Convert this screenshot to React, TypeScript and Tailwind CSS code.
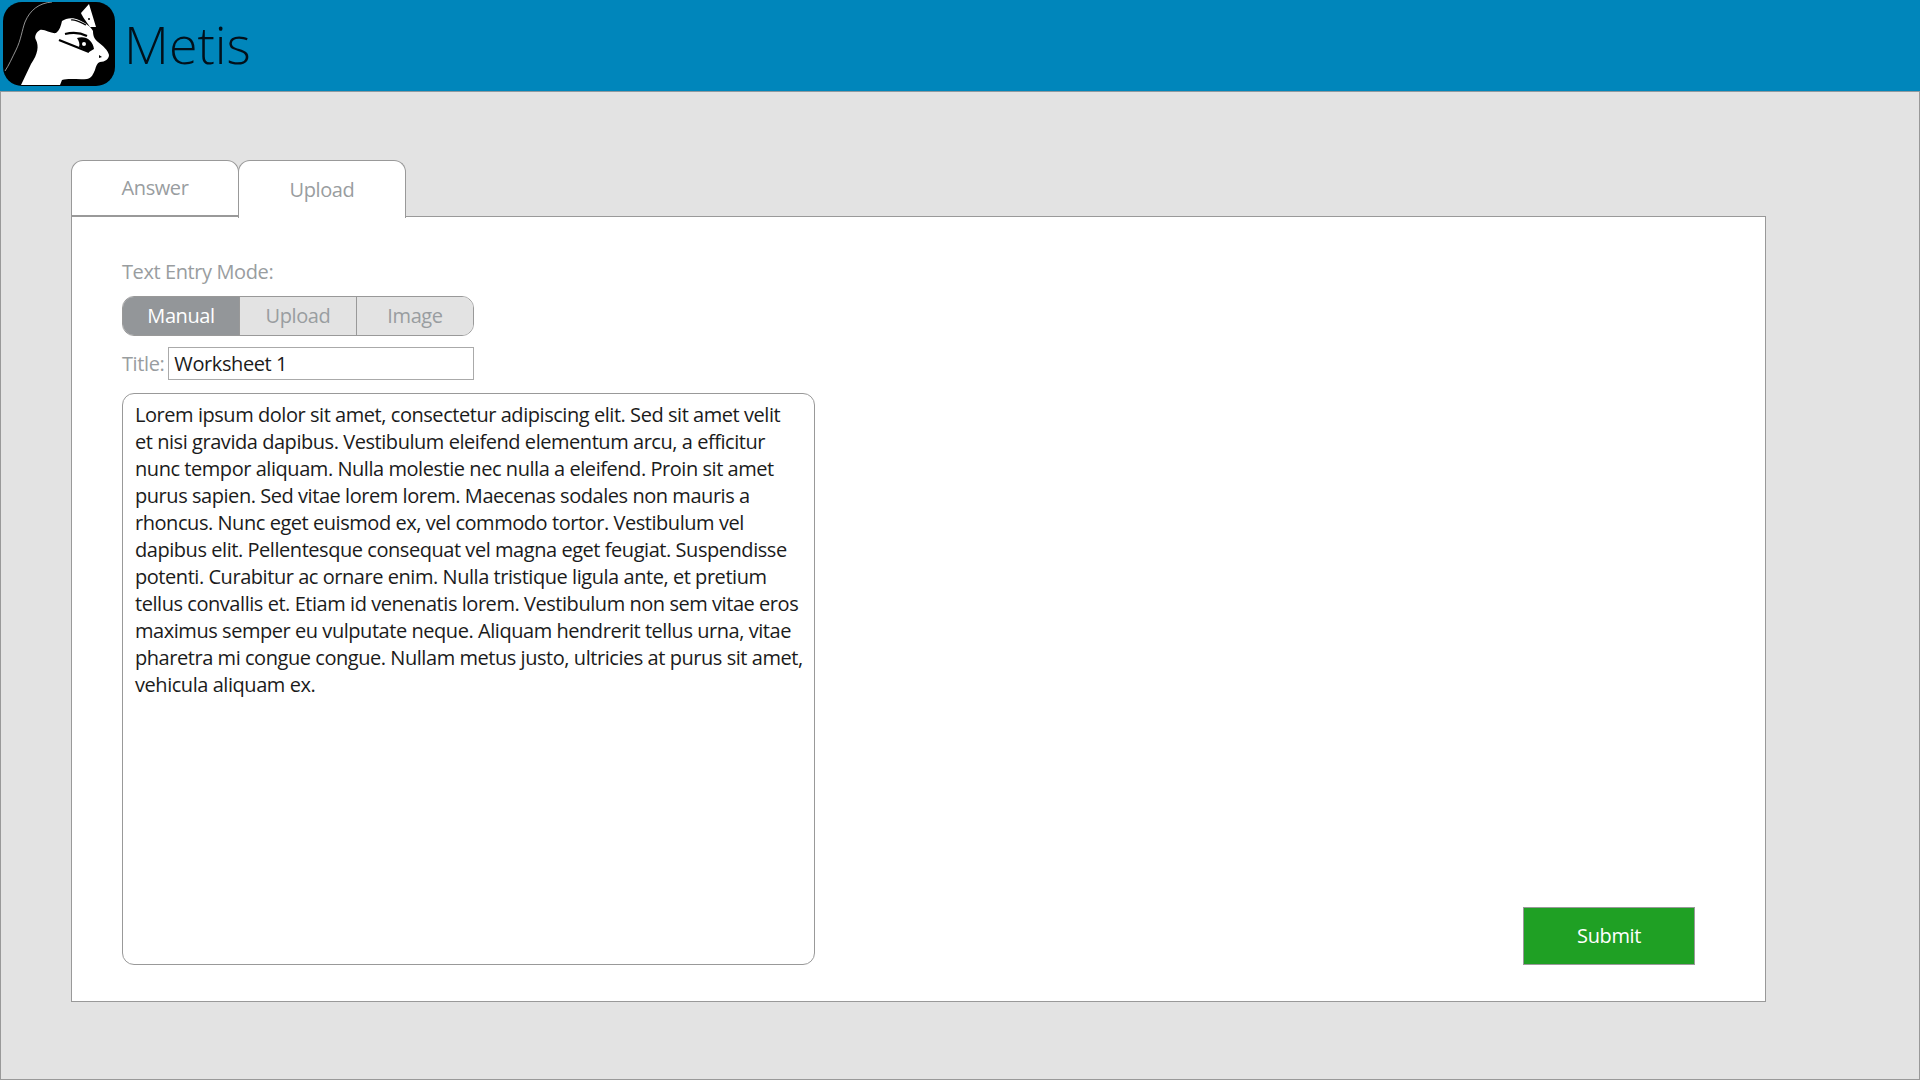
import { useState } from 'react';

const loremLines = [
  'Lorem ipsum dolor sit amet, consectetur adipiscing elit. Sed sit amet velit',
  'et nisi gravida dapibus. Vestibulum eleifend elementum arcu, a efficitur',
  'nunc tempor aliquam. Nulla molestie nec nulla a eleifend. Proin sit amet',
  'purus sapien. Sed vitae lorem lorem. Maecenas sodales non mauris a',
  'rhoncus. Nunc eget euismod ex, vel commodo tortor. Vestibulum vel',
  'dapibus elit. Pellentesque consequat vel magna eget feugiat. Suspendisse',
  'potenti. Curabitur ac ornare enim. Nulla tristique ligula ante, et pretium',
  'tellus convallis et. Etiam id venenatis lorem. Vestibulum non sem vitae eros',
  'maximus semper eu vulputate neque. Aliquam hendrerit tellus urna, vitae',
  'pharetra mi congue congue. Nullam metus justo, ultricies at purus sit amet,',
  'vehicula aliquam ex.',
];

// Logo: black rounded square with a white profile
const Logo = () => (
  <svg viewBox="0 0 112 84" className="w-[112px] h-[84px] shrink-0">
    <rect x="0" y="0" width="112" height="84" rx="19" fill="#000" />
    <path d="M49 0 C36 1 27 8 22 20 C19 28 18 38 13 48 C9 56 6 63 2 69" stroke="#b8b8b8" strokeWidth="0.8" fill="none" />
    <path d="M18 83 L28 62 C35 52 36 44 33 38 C31 35 33 30 37 28 C42 27 48 32 53 31 C57 28 58 23 59 19 C63 16 70 15 76 18 C83 21 88 25 90 29 C90 33 91 37 95 40 C100 44 105 48 106 53 C106 57 102 60 97 60 C94 61 93 64 92 68 C90 72 89 76 84 77 C76 78 66 76 59 78 L57 83 Z" fill="#fff" />
    <path d="M86 2 L93 25 L87 25 C83 19 79 14 78 11 Z" fill="#fff" />
    <path d="M68 18 C72 17 77 20 83 23" stroke="#000" strokeWidth="1.2" fill="none" />
    <path d="M62 32 C70 30 78 31 84 34" stroke="#000" strokeWidth="2" fill="none" />
    <path d="M56 38 L86 50" stroke="#000" strokeWidth="2.4" />
    <path d="M74 36 C82 33 90 38 91 47 L86 50 L76 45 C77 42 76 39 74 36 Z" fill="#000" />
    <circle cx="81" cy="42" r="2" fill="#fff" />
    <path d="M96 53 L99 55 L96 56 Z" fill="#000" />
    <circle cx="86" cy="17" r="1" fill="#000" />
  </svg>
);

const modes = ['Manual', 'Upload', 'Image'];

const App = () => {
  const [tab, setTab] = useState('Upload');
  const [mode, setMode] = useState('Manual');
  const [title, setTitle] = useState('Worksheet 1');

  return (
    <div className="w-[1920px] h-[1080px] flex flex-col bg-[#e3e3e3] font-['Open_Sans',sans-serif] overflow-hidden">
      {/* Header */}
      <div className="h-[92px] shrink-0 bg-[#0086bb] border-b border-[#8f9a9f] flex items-center pl-[3px] pb-[4px]">
        <Logo />
        <span className="ml-[9px] text-[52px] leading-none font-light text-[#02101a]">Metis</span>
      </div>

      {/* Main */}
      <div className="flex-1 border border-t-0 border-[#999] pl-[70px] pt-[68px]">
        <div className="flex">
          {['Answer', 'Upload'].map((t) => (
            <button
              key={t}
              onClick={() => setTab(t)}
              className={`w-[168px] h-[57px] -mr-px bg-white border border-[#999] rounded-t-[12px] text-[20px] tracking-[-0.4px] text-[#999da0] relative ${
                tab === t ? 'border-b-0 z-10 h-[58px] -mb-px' : 'border-b-2'
              }`}
            >
              {t}
            </button>
          ))}
        </div>

        <div className="w-[1695px] h-[786px] bg-white border border-[#999] -mt-px flex justify-between items-end pl-[50px] pr-[70px] pb-[36px]">
          <div className="w-[693px]">
            <div className="text-[20px] leading-[27px] tracking-[-0.4px] text-[#999da0] mb-[11px]">Text Entry Mode:</div>

            <div className="w-[352px] h-[40px] flex rounded-[12px] border border-[#999] overflow-hidden">
              {modes.map((m, i) => (
                <button
                  key={m}
                  onClick={() => setMode(m)}
                  className={`flex-1 text-[20px] tracking-[-0.4px] ${i > 0 ? 'border-l border-[#999]' : ''} ${
                    mode === m ? 'bg-[#939699] text-white' : 'bg-[#e3e3e3] text-[#999da0]'
                  }`}
                >
                  {m}
                </button>
              ))}
            </div>

            <div className="flex items-center gap-[4px] mt-[11px] w-[352px]">
              <label className="text-[20px] tracking-[-0.4px] text-[#999da0]">Title:</label>
              <input
                value={title}
                onChange={(e) => setTitle(e.target.value)}
                className="flex-1 min-w-0 h-[33px] border border-[#aaa] px-[5px] text-[20px] tracking-[-0.4px] text-[#1b1b1b] outline-none"
              />
            </div>

            <div className="h-[572px] mt-[13px] border border-[#999] rounded-[12px] pl-[12px] pt-[7px] text-[20px] leading-[27px] tracking-[-0.45px] text-[#1b1b1b] whitespace-nowrap">
              {loremLines.map((line) => (
                <div key={line}>{line}</div>
              ))}
            </div>
          </div>

          <button className="w-[172px] h-[58px] bg-[#1fa024] border border-[#999] text-white text-[20px] tracking-[-0.4px]">
            Submit
          </button>
        </div>
      </div>
    </div>
  );
};

export default App;
